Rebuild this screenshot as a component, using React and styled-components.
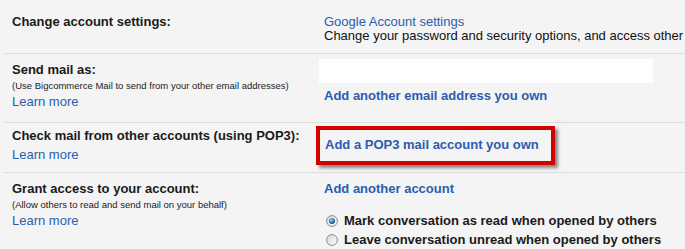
import React from 'react';
import styled, { createGlobalStyle } from 'styled-components';

const GlobalStyle = createGlobalStyle`
  html, body {
    margin: 0;
    padding: 0;
    background: #f4f4f4;
    overflow: hidden;
  }
  body {
    font-family: "Liberation Sans", Arial, sans-serif;
    font-size: 13px;
    color: #222;
  }
`;

const Page = styled.div`
  width: 685px;
  height: 249px;
  background: #f4f4f4;
  overflow: hidden;
`;

const Row = styled.div`
  display: grid;
  grid-template-columns: 312px 1fr;
  margin-left: 4px;
  padding: ${p => p.$top}px 0 ${p => p.$bottom}px 8px;
  border-bottom: ${p => (p.$last ? 'none' : '1px solid #dcdcdc')};
`;

const LabelCol = styled.div`
  padding-top: ${p => p.$top || 0}px;
`;

const ValueCol = styled.div`
  white-space: nowrap;
`;

const Label = styled.div`
  font-weight: bold;
  font-size: 13px;
  line-height: 14px;
  color: #1a1a1a;
`;

const Hint = styled.div`
  margin-top: 3px;
  font-size: 9.5px;
  line-height: 12px;
  color: #222;
`;

const Learn = styled.a`
  display: block;
  margin-top: ${p => p.$gap}px;
  font-size: 13px;
  line-height: 14px;
  color: #2a5db0;
  text-decoration: none;
`;

const Link = styled.a`
  display: block;
  margin-top: ${p => p.$gap || 0}px;
  font-size: 13px;
  line-height: 14px;
  font-weight: ${p => (p.$bold ? 'bold' : 'normal')};
  color: #2a5db0;
  text-decoration: none;
`;

const Plain = styled.div`
  font-size: 13px;
  line-height: 14px;
  color: #111;
`;

const Field = styled.div`
  width: 334px;
  height: 24px;
  margin-left: -5px;
  background: #fff;
`;

const Highlight = styled.div`
  box-sizing: border-box;
  width: 239px;
  height: 39px;
  margin-left: -8px;
  padding: 8px 0 0 5px;
  border: 4px solid #d20000;
  box-shadow: 3px 3px 3px rgba(0, 0, 0, 0.45);
`;

const Options = styled.div`
  margin-top: 15px;
`;

const Option = styled.label`
  display: flex;
  align-items: center;
  gap: 6px;
  height: 19px;
  margin-left: 2px;
  font-weight: bold;
  font-size: 13px;
  color: #1a1a1a;
`;

const Radio = ({ checked }) => (
  <svg width="12" height="12" viewBox="0 0 12 12">
    <defs>
      <linearGradient id="ring" x1="0" y1="0" x2="1" y2="1">
        <stop offset="0" stopColor="#d6d6d6" />
        <stop offset="1" stopColor="#ffffff" />
      </linearGradient>
      <radialGradient id="dot" cx="0.4" cy="0.35" r="0.7">
        <stop offset="0" stopColor="#9ed8f6" />
        <stop offset="0.55" stopColor="#2f7fb8" />
        <stop offset="1" stopColor="#123f6b" />
      </radialGradient>
    </defs>
    <circle cx="6" cy="6" r="5.4" fill="url(#ring)" stroke="#8c8c8c" strokeWidth="1" />
    {checked && <circle cx="6" cy="6" r="3" fill="url(#dot)" />}
  </svg>
);

export default function App() {
  return (
    <Page>
      <GlobalStyle />

      <Row $top={15} $bottom={10}>
        <LabelCol>
          <Label>Change account settings:</Label>
        </LabelCol>
        <ValueCol>
          <Link>Google Account settings</Link>
          <Plain>Change your password and security options, and access other</Plain>
        </ValueCol>
      </Row>

      <Row $top={5} $bottom={13}>
        <LabelCol $top={4}>
          <Label>Send mail as:</Label>
          <Hint>(Use Bigcommerce Mail to send from your other email addresses)</Hint>
          <Learn $gap={3}>Learn more</Learn>
        </LabelCol>
        <ValueCol>
          <Field />
          <Link $bold $gap={6}>Add another email address you own</Link>
        </ValueCol>
      </Row>

      <Row $top={3} $bottom={7}>
        <LabelCol $top={3}>
          <Label>Check mail from other accounts (using POP3):</Label>
          <Learn $gap={5}>Learn more</Learn>
        </LabelCol>
        <ValueCol>
          <Highlight>
            <Link $bold>Add a POP3 mail account you own</Link>
          </Highlight>
        </ValueCol>
      </Row>

      <Row $top={9} $bottom={0} $last>
        <LabelCol>
          <Label>Grant access to your account:</Label>
          <Hint>(Allow others to read and send mail on your behalf)</Hint>
          <Learn $gap={3}>Learn more</Learn>
        </LabelCol>
        <ValueCol>
          <Link $bold>Add another account</Link>
          <Options>
            <Option>
              <Radio checked />
              Mark conversation as read when opened by others
            </Option>
            <Option>
              <Radio />
              Leave conversation unread when opened by others
            </Option>
          </Options>
        </ValueCol>
      </Row>
    </Page>
  );
}
